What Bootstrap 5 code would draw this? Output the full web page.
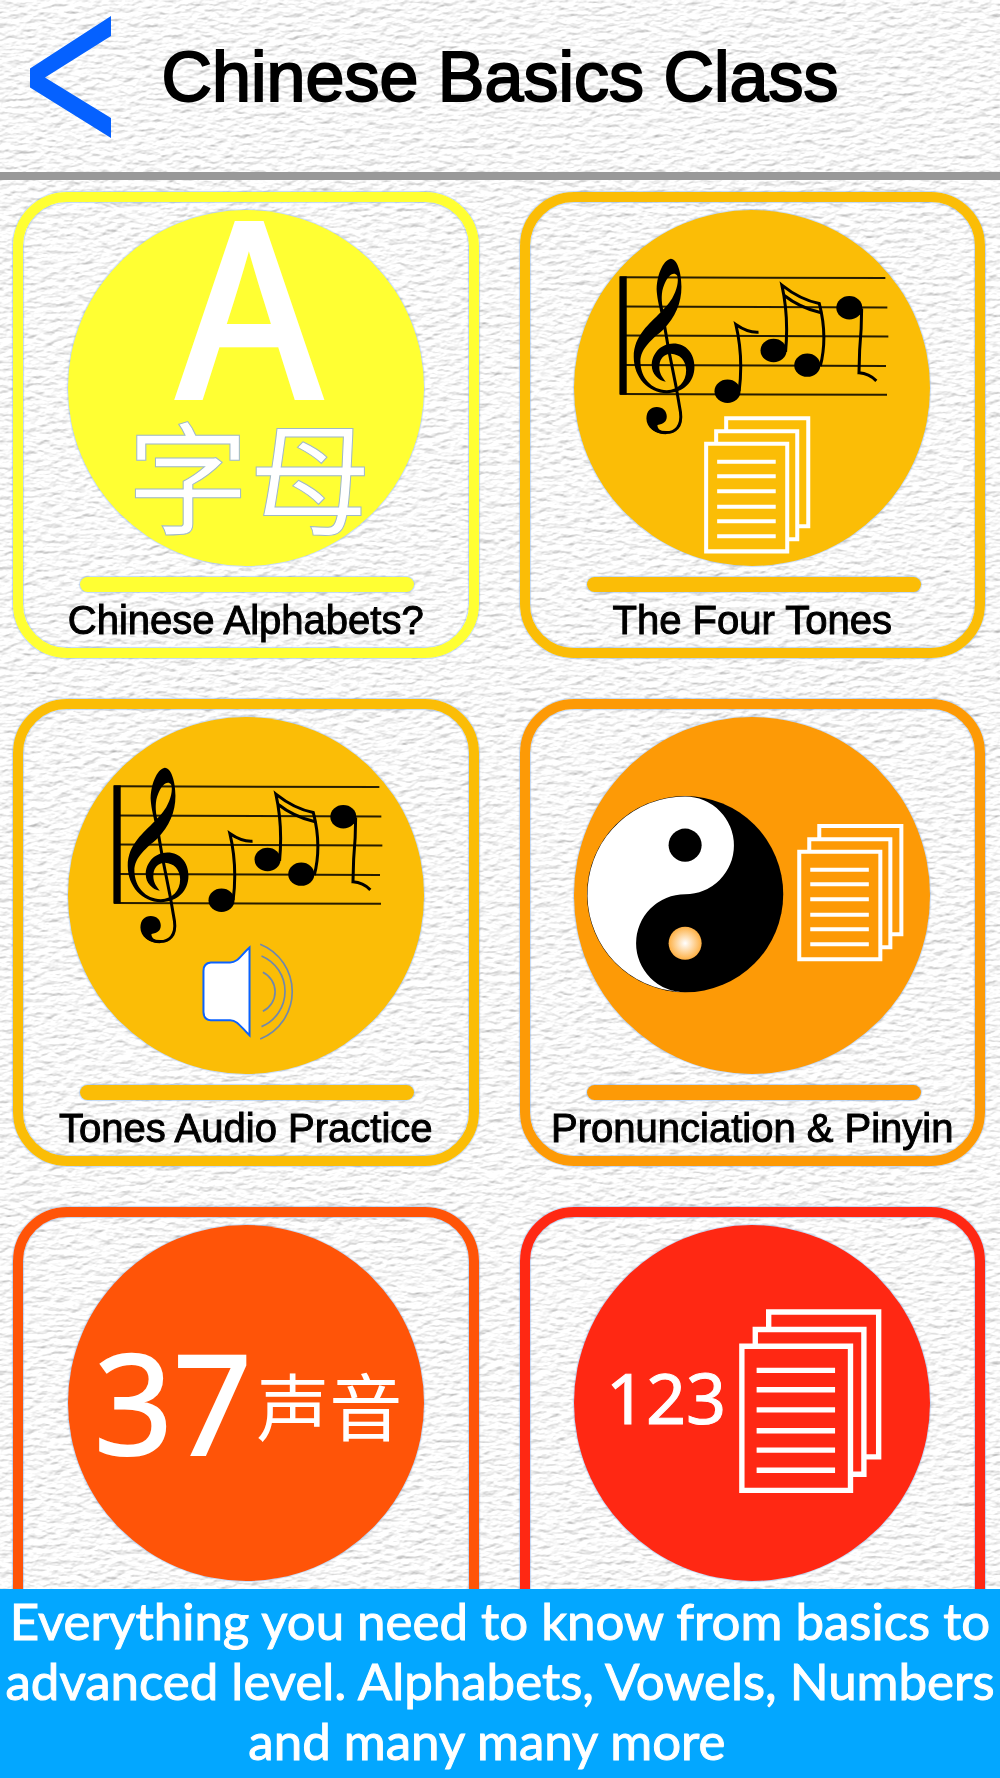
<!DOCTYPE html>
<html lang="en">
<head>
<meta charset="utf-8">
<meta name="viewport" content="width=device-width, initial-scale=1">
<title>Chinese Basics Class</title>
<link href="https://cdn.jsdelivr.net/npm/bootstrap@5.3.0/dist/css/bootstrap.min.css" rel="stylesheet">
<style>
  body { background: #f6f6f6; color: #000; font-family: "Liberation Sans", Arial, sans-serif; }
  .paper { z-index: -1; }
  .topbar { padding: 16px 0 34px; border-bottom: 8px solid #999; }
  .side { flex: 1 1 0; padding-left: 30px; }
  .back-arrow { width: 81px; height: 122px; }
  .page-title { font-size: 70px; line-height: 70px; font-weight: 400; -webkit-text-stroke: 2px #000; }
  .lessons { padding: 12px 15px 41px 13px; }
  .lesson-row { --bs-gutter-x: 41px; --bs-gutter-y: 41px; }
  .lesson { aspect-ratio: 1; border: 10px solid var(--tone); border-radius: 54px; padding-top: 8px; color: #000;
    box-shadow: 0 0 1px 1px rgba(130, 175, 235, .5), inset 0 0 1px 1px rgba(130, 175, 235, .5); }
  .lesson:hover { color: #000; }
  .disc { width: 80%; aspect-ratio: 1; overflow: visible; border-radius: 50%; background: var(--tone); box-shadow: 0 0 1px 1px rgba(130, 175, 235, .45); }
  .rule { width: 75%; height: 15px; margin: 11px 0 0 3px; border-radius: 8px; background: var(--tone); box-shadow: 0 0 1px 1px rgba(130, 175, 235, .5); }
  .lesson-name { font-size: 40px; line-height: 56px; -webkit-text-stroke: 1px #000; }
  .yellow { --tone: #ffff33; }
  .amber { --tone: #fbbd06; }
  .orange { --tone: #fd9a06; }
  .vermilion { --tone: #ff5408; }
  .scarlet { --tone: #ff2813; }
  .latin { font-family: "Noto Sans", sans-serif; fill: #fff; stroke: #fff; text-anchor: middle; }
  .hanzi { font-family: "Noto Sans CJK SC", sans-serif; fill: #fff; text-anchor: middle; }
  .edge { stroke: #9fb8c8; stroke-width: 1; }
  .sheet { fill: var(--tone); stroke: #fff; stroke-width: 4; }
  .promo { background: #03a7ff; color: #fff; padding: 2px 0 7px; font-family: Lato, sans-serif; font-size: 51px; line-height: 60px; -webkit-text-stroke: 1px #fff; }
</style>
<script src="https://cdn.jsdelivr.net/npm/bootstrap@5.3.0/dist/js/bootstrap.bundle.min.js"></script>
</head>
<body>
<!-- Embossed paper behind everything -->
<svg class="paper position-fixed top-0 start-0 w-100 h-100" aria-hidden="true">
  <filter id="emboss" x="0" y="0" width="100%" height="100%" color-interpolation-filters="sRGB">
    <feTurbulence type="fractalNoise" baseFrequency=".09 .19" numOctaves="3" seed="8"/>
    <feColorMatrix values="0 0 0 0 0  0 0 0 0 0  0 0 0 0 0  1 0 0 0 0"/>
    <feDiffuseLighting surfaceScale=".9" diffuseConstant="1.11" lighting-color="#fff">
      <feDistantLight azimuth="250" elevation="62"/>
    </feDiffuseLighting>
  </filter>
  <rect width="100%" height="100%" filter="url(#emboss)"/>
</svg>

<!-- Shared drawings -->
<svg class="d-none" aria-hidden="true">
  <symbol id="pages" viewBox="0 0 106 137" overflow="visible">
    <path class="sheet" d="M22 2H104V110H22Z"/>
    <path class="sheet" d="M12 15H93V123H12Z"/>
    <path class="sheet" d="M2 27.500H83V135H2Z"/>
    <path d="M13 45.500H71.500M13 60H71.500M13 75H71.500M13 90.500H71.500M13 105H71.500M13 120H71.500" stroke="#fff" stroke-width="4"/>
  </symbol>
  <symbol id="music" viewBox="0 0 930 600" overflow="visible">
    <path d="M58 109H80V463H58Z"/>
    <path d="M60 111.500L855 114M60 199L861 202M60 286L864 289M60 374.500L857 377.500M60 461.500L860 464" stroke="#000" stroke-width="6" stroke-opacity=".85"/>
    <path d="M212 56C188 60 168 110 170 155C172 180 179 205 181 218L190 211C183 185 183 155 192 135C202 108 220 92 231 106C237 122 230 150 216 175C205 192 190 208 181 217C150 250 101 285 101 350C101 412 145 459 200 459C250 459 283 425 283 380C283 340 258 310 220 310C180 310 155 343 155 375C155 402 175 420 197 425C184 408 176 395 178 375C180 355 192 342 212 341C240 342 258 362 258 390C258 425 235 448 200 450C155 449 122 415 121 365C121 322 160 295 190 268C225 232 244 190 244 140C244 100 232 56 212 56Z"/>
    <path d="M193 255L205 325L228 440L241 515C247 560 225 577 198 577C176 577 160 568 154 556" fill="none" stroke="#000" stroke-width="9"/>
    <path d="M139 535C139 512 152 500 170 500C188 500 200 512 200 528C200 544 190 552 172 554C172 568 185 574 198 574V582C165 582 139 562 139 535Z"/>
    <ellipse cx="382" cy="453" rx="39" ry="35"/><ellipse cx="520" cy="331" rx="39" ry="35"/>
    <ellipse cx="621" cy="375" rx="39" ry="35"/><ellipse cx="747" cy="203" rx="39" ry="35"/>
    <path d="M417 452Q430 350 407 253Q443 278 475 276M556 335Q566 230 545 135Q600 179 657 190Q683 290 660 378M549 164Q600 204 660 217M784 205Q784 265 778 330L776 398Q806 400 828 422" fill="none" stroke="#000" stroke-width="9"/>
  </symbol>
</svg>

<header class="topbar d-flex align-items-center">
  <div class="side d-flex">
    <button type="button" class="btn p-0 border-0 d-flex" aria-label="Back">
      <svg class="back-arrow" viewBox="0 0 81 122"><path d="M81 0V20L15 61.500L81 102V122L0 71.500V52.500Z" fill="#0561ff"/></svg>
    </button>
  </div>
  <h1 class="page-title m-0 text-nowrap">Chinese Basics Class</h1>
  <div class="side"></div>
</header>

<main class="lessons">
  <div class="row lesson-row row-cols-2 mt-0">
    <div class="col mt-0">
      <a href="#alphabets" class="lesson yellow d-flex flex-column align-items-center text-decoration-none">
        <svg class="disc" viewBox="0 0 356 356">
          <text class="hanzi" x="181" y="187" font-size="236" stroke="#fff" stroke-width="6">A</text>
          <text class="hanzi edge" x="181" y="315" font-size="122">字母</text>
        </svg>
        <span class="rule"></span>
        <span class="lesson-name text-nowrap">Chinese Alphabets?</span>
      </a>
    </div>
    <div class="col mt-0">
      <a href="#tones" class="lesson amber d-flex flex-column align-items-center text-decoration-none">
        <svg class="disc" viewBox="0 0 356 356">
          <use href="#music" x="26" y="30" width="310" height="200"/>
          <use href="#pages" x="130" y="206" width="106" height="137"/>
        </svg>
        <span class="rule"></span>
        <span class="lesson-name text-nowrap">The Four Tones</span>
      </a>
    </div>
    <div class="col">
      <a href="#practice" class="lesson amber d-flex flex-column align-items-center text-decoration-none">
        <svg class="disc" viewBox="0 0 356 356">
          <use href="#music" x="26" y="32" width="310" height="200"/>
          <g transform="translate(-68 -27) scale(.3333)" stroke-width="5">
            <path d="M632 817H690C712 817 722 795 748 772V1035C722 1010 712 990 690 990H632Q610 988 610 965V842Q610 819 632 817Z" fill="#fff" stroke="#0a62ff" stroke-width="6"/>
            <path d="M788 846A65 65 0 0 1 788 963M784 797A115 115 0 0 1 784 1009M780 762A153 153 0 0 1 780 1046" fill="none" stroke="#7088ad"/>
          </g>
        </svg>
        <span class="rule"></span>
        <span class="lesson-name text-nowrap">Tones Audio Practice</span>
      </a>
    </div>
    <div class="col">
      <a href="#pinyin" class="lesson orange d-flex flex-column align-items-center text-decoration-none">
        <svg class="disc" viewBox="0 0 356 356">
          <radialGradient id="pearl"><stop offset="0" stop-color="#fff"/><stop offset="1" stop-color="#fdb044"/></radialGradient>
          <g transform="translate(1 0)">
            <circle cx="110" cy="177" r="98"/>
            <path d="M110 79.500A97.500 97.500 0 0 0 96 273.500Q103 275 110 275A48 48 0 0 1 110 177A48 48 0 0 0 110 79.500Z" fill="#fff"/>
            <circle cx="110" cy="128" r="16.500"/>
            <circle cx="110" cy="226" r="16.500" fill="url(#pearl)"/>
          </g>
          <use href="#pages" x="223" y="107" width="106" height="137"/>
        </svg>
        <span class="rule"></span>
        <span class="lesson-name text-nowrap">Pronunciation &amp; Pinyin</span>
      </a>
    </div>
    <div class="col">
      <a href="#sounds" class="lesson vermilion d-flex flex-column align-items-center text-decoration-none" aria-label="37 声音">
        <svg class="disc" viewBox="0 0 356 356">
          <text class="latin" x="105" y="230" font-size="138" stroke-width="2">37</text>
          <text class="hanzi" x="261" y="210" font-size="73">声音</text>
        </svg>
        <span class="rule"></span>
      </a>
    </div>
    <div class="col">
      <a href="#numbers" class="lesson scarlet d-flex flex-column align-items-center text-decoration-none" aria-label="123">
        <svg class="disc" viewBox="0 0 356 356">
          <text class="latin" x="92" y="199" font-size="70" stroke-width="1">123</text>
          <use href="#pages" x="165" y="84" width="142" height="184"/>
        </svg>
        <span class="rule"></span>
      </a>
    </div>
  </div>
</main>

<footer class="promo fixed-bottom text-center text-nowrap">
  Everything you need to know from basics to<br>
  advanced level. Alphabets, Vowels, Numbers<br>
  and many many more&nbsp;&nbsp;
</footer>
</body>
</html>
